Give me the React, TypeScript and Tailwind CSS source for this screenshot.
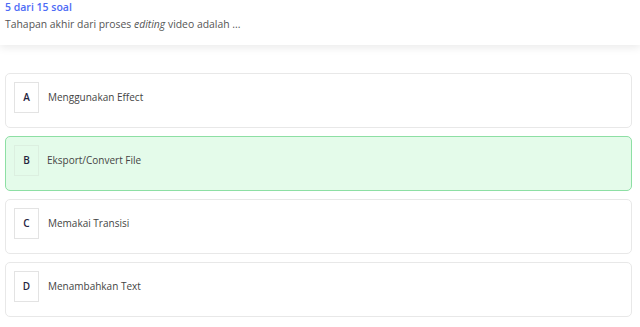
import React from "react";

const options = [
  { letter: "A", text: "Menggunakan Effect", correct: false },
  { letter: "B", text: "Eksport/Convert File", correct: true },
  { letter: "C", text: "Memakai Transisi", correct: false },
  { letter: "D", text: "Menambahkan Text", correct: false },
];

export default function App() {
  return (
    <div
      className="w-[640px] h-[327px] bg-white overflow-hidden"
      style={{ fontFamily: '"Open Sans", "Noto Sans", sans-serif' }}
    >
      <div className="h-[45px] bg-white shadow-[0_3px_8px_rgba(0,0,0,0.08)] px-[5px] pt-[1px] relative z-10">
        <div className="text-[10.5px] leading-[13px] font-semibold text-[#4d6bf6]">5 dari 15 soal</div>
        <div className="mt-[4px] text-[10.4px] leading-[13px] text-[#555]">
          Tahapan akhir dari proses <i>editing</i> video adalah ...
        </div>
      </div>
      <div className="flex flex-col gap-[8px] pl-[5px] pr-[8px] pt-[28px]">
        {options.map((o) => (
          <div
            key={o.letter}
            className={
              o.correct
                ? "h-[55px] rounded-[5px] border border-[#8ddfa4] bg-[#e4fbea] flex items-start pt-[8px] pl-[8px]"
                : "h-[55px] rounded-[5px] border border-[#e8e8e8] bg-white flex items-start pt-[8px] pl-[8px]"
            }
          >
            <div
              className={
                o.correct
                  ? "w-[25px] h-[31px] border border-[#dcefe0] flex items-center justify-center text-[10px] font-semibold text-[#1f2540]"
                  : "w-[25px] h-[31px] border border-[#e3e3e3] bg-white flex items-center justify-center text-[10px] font-semibold text-[#1f2540]"
              }
            >
              {o.letter}
            </div>
            <div
              className={
                o.correct
                  ? "ml-[8px] h-[31px] flex items-center text-[10px] text-[#444]"
                  : "ml-[9px] h-[31px] flex items-center text-[10px] text-[#444]"
              }
            >
              {o.text}
            </div>
          </div>
        ))}
      </div>
    </div>
  );
}
